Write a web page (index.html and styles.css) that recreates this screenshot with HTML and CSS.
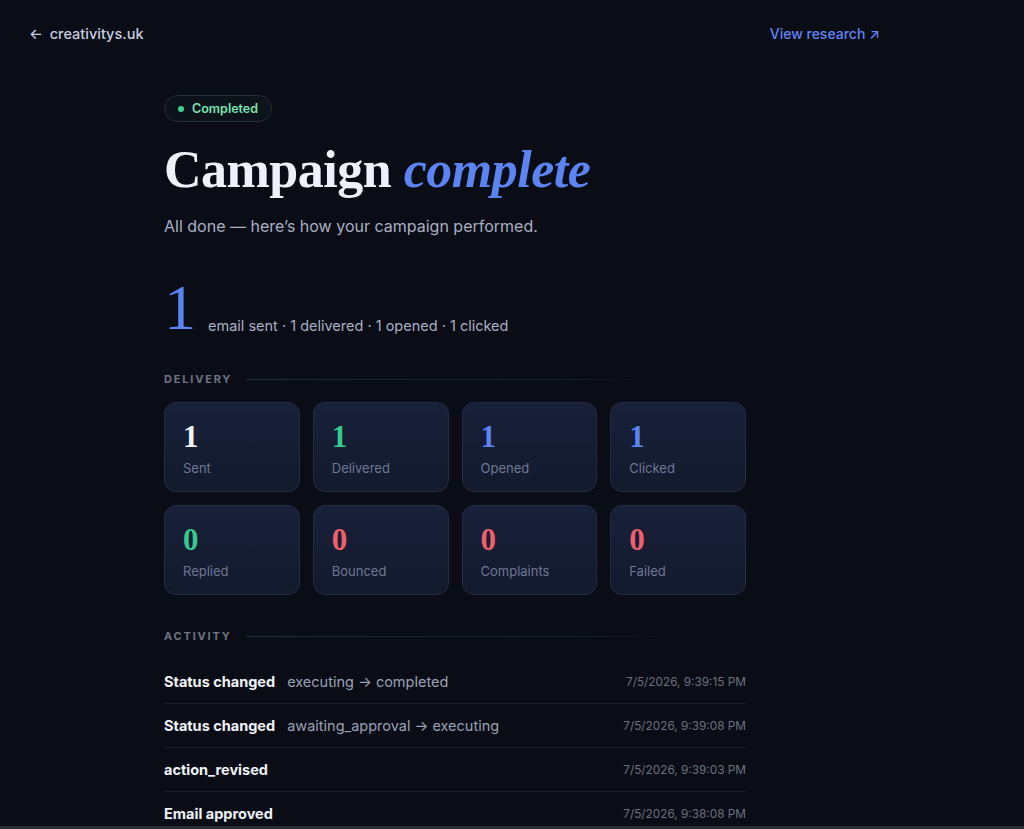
FILE: index.html
```html
<!DOCTYPE html>
<html>
<head>
<title>Campaign complete</title>
<link rel="stylesheet" href="styles.css">
</head>
<body>

<div class="page">

  <!-- TOP BAR -->
  <div class="topbar">
    <a class="back" href="#"><span class="arrow">←</span> creativitys.uk</a>
    <a class="research" href="#">View research ↗</a>
  </div>

  <div class="main">

    <div class="badge"><span class="dot"></span>Completed</div>

    <h1 class="title">Campaign <em>complete</em></h1>
    <p class="sub">All done — here’s how your campaign performed.</p>

    <!-- SUMMARY -->
    <div class="summary">
      <span class="big">1</span>
      <span class="summary-text">email sent · 1 delivered · 1 opened · 1 clicked</span>
    </div>

    <!-- DELIVERY -->
    <div class="section-label">Delivery</div>
    <div class="stats">
      <div class="stat"><div class="num white">1</div><div class="lbl">Sent</div></div>
      <div class="stat"><div class="num green">1</div><div class="lbl">Delivered</div></div>
      <div class="stat"><div class="num blue">1</div><div class="lbl">Opened</div></div>
      <div class="stat"><div class="num blue">1</div><div class="lbl">Clicked</div></div>
      <div class="stat"><div class="num green">0</div><div class="lbl">Replied</div></div>
      <div class="stat"><div class="num red">0</div><div class="lbl">Bounced</div></div>
      <div class="stat"><div class="num red">0</div><div class="lbl">Complaints</div></div>
      <div class="stat"><div class="num red">0</div><div class="lbl">Failed</div></div>
    </div>

    <!-- ACTIVITY -->
    <div class="section-label activity-label">Activity</div>
    <div class="activity">
      <div class="row">
        <span class="what">Status changed</span>
        <span class="detail">executing → completed</span>
        <span class="when">7/5/2026, 9:39:15 PM</span>
      </div>
      <div class="row">
        <span class="what">Status changed</span>
        <span class="detail">awaiting_approval → executing</span>
        <span class="when">7/5/2026, 9:39:08 PM</span>
      </div>
      <div class="row">
        <span class="what">action_revised</span>
        <span class="detail"></span>
        <span class="when">7/5/2026, 9:39:03 PM</span>
      </div>
      <div class="row">
        <span class="what">Email approved</span>
        <span class="detail"></span>
        <span class="when">7/5/2026, 9:38:08 PM</span>
      </div>
    </div>

  </div>
</div>

<div class="bottom-edge"></div>

</body>
</html>
```

FILE: styles.css
```css
html, body {margin:0; background:#0a0d15; height:100%; overflow:hidden;}
body {font-family:Inter, "Noto Sans", sans-serif; color:#e9ecf5;}
a {text-decoration:none;}

.page {width:910px;}

.topbar {
  display:flex; justify-content:space-between; align-items:center;
  padding:23px 30px 0 29px; height:20px;
}
.back {color:#c9cde0; font-size:14.5px; font-weight:500;}
.back .arrow {margin-right:3px;}
.research {color:#5f85f5; font-size:14px; font-weight:500;}

.main {width:582px; margin:0 auto; padding-top:52px;}

.badge {
  display:inline-flex; align-items:center; gap:8px;
  height:25px; padding:0 13px 0 13px;
  border:1px solid #262c38; border-radius:14px;
  background:#0d131a;
  color:#79e3b0; font-size:12.5px; font-weight:600;
}
.badge .dot {width:6px; height:6px; border-radius:50%; background:#3ed495;}

.title {
  margin:17px 0 0; font-family:"Liberation Serif", serif;
  font-size:52px; font-weight:700; line-height:62px; color:#eff1fa;
  letter-spacing:-0.5px;
}
.title em {color:#5b83f2; font-weight:700;}

.sub {margin:15px 0 0; font-size:16px; color:#a9afc4;}

.summary {display:flex; align-items:baseline; gap:12px; margin-top:40px;}
.big {
  font-family:"Liberation Serif", serif; font-size:64px; line-height:64px;
  color:#5b83f2;
}
.summary-text {font-size:14.5px; color:#a9afc4; position:relative; top:2px;}

.section-label {
  display:flex; align-items:center; gap:14px;
  margin-top:32px; width:500px;
  font-size:11px; font-weight:700; letter-spacing:1.8px; text-transform:uppercase;
  color:#6d7486;
}
.section-label::after {
  content:""; flex:1; height:1px;
  background:linear-gradient(90deg,#232a38,#1a2030 70%,rgba(26,32,48,0));
}

.stats {
  display:grid; grid-template-columns:repeat(4,1fr); gap:13px;
  margin-top:16px;
}
.stat {
  height:90px; box-sizing:border-box; padding:19px 18px 0;
  border:1px solid #252d42; border-radius:12px;
  background:linear-gradient(180deg,#18203a,#131a2c);
}
.num {font-family:"Liberation Serif", serif; font-size:31px; font-weight:700; line-height:30px;}
.lbl {margin-top:8px; font-size:13px; color:#6e7894;}
.white {color:#f1f2fb;}
.green {color:#37c98d;}
.blue {color:#5b83f2;}
.red {color:#f0606c;}

.activity-label {margin-top:34px; width:526px;}

.activity {margin-top:26px;}
.row {
  display:flex; align-items:center; height:43px;
  border-bottom:1px solid #1a1f2a;
}
.row:first-child {margin-top:-9px;}
.what {font-size:14.5px; font-weight:700; color:#f1f3fa;}
.detail {margin-left:12px; font-size:14.5px; color:#9aa1b6; flex:1;}
.when {font-size:11.8px; color:#6b7181;}

.bottom-edge {
  position:fixed; left:0; right:0; bottom:0; height:3px; background:#2b2d31;
}
```
